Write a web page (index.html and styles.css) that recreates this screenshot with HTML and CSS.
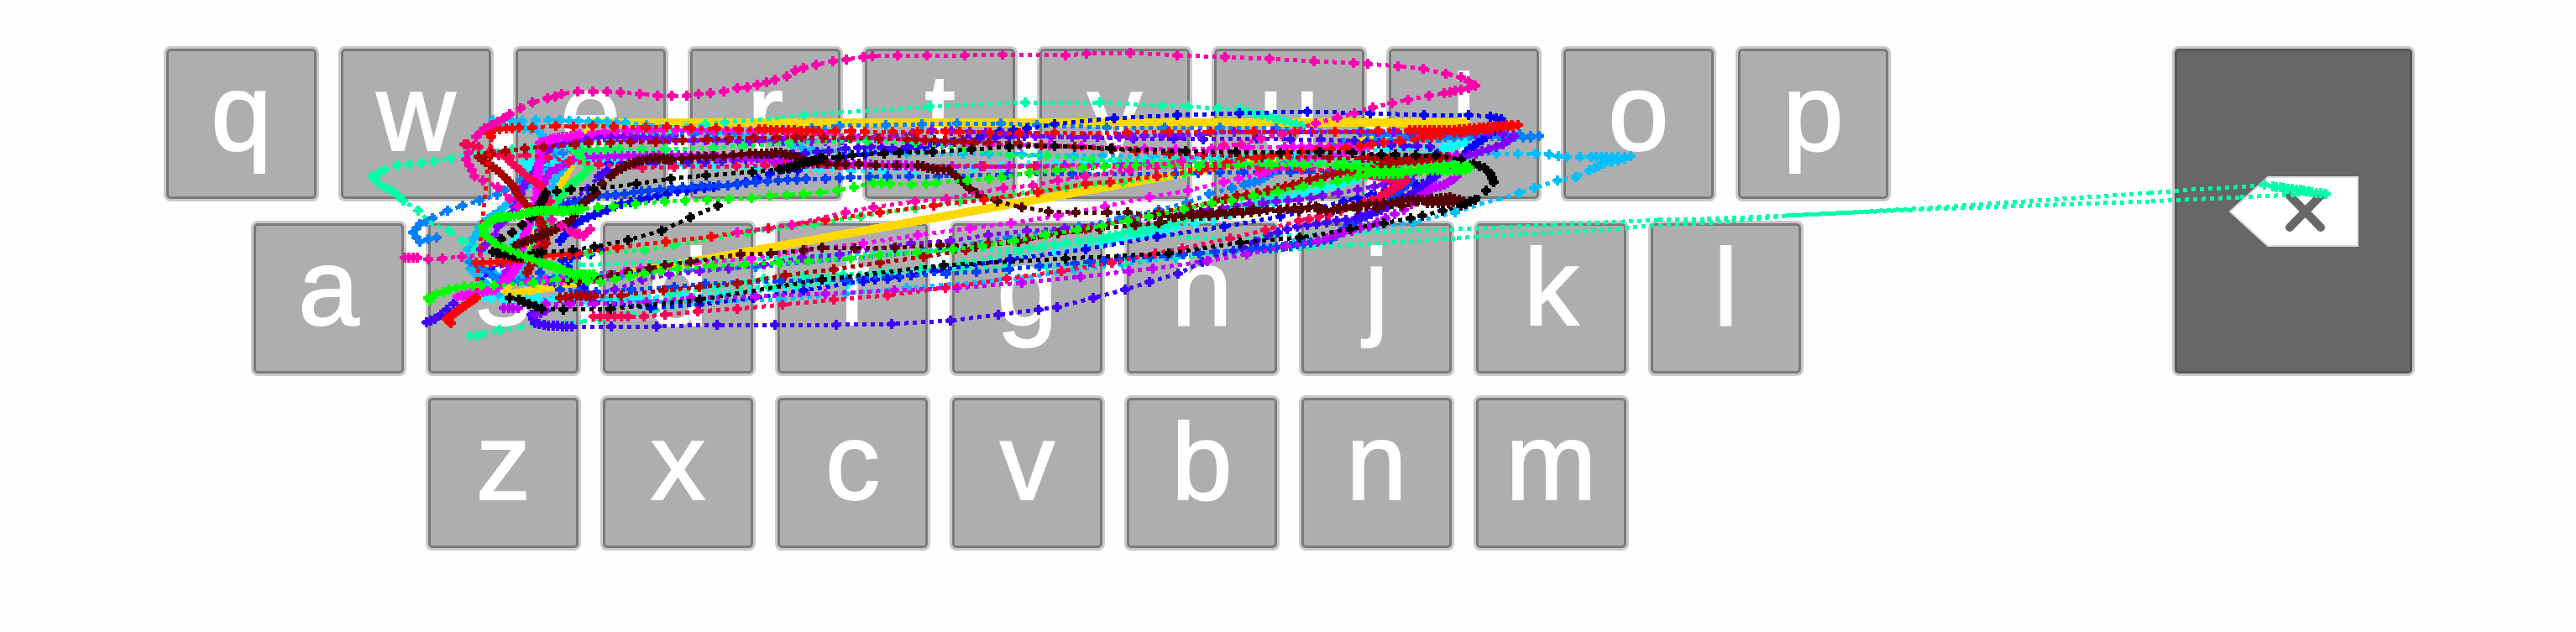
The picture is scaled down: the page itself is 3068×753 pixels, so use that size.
FILE: index.html
```html
<!DOCTYPE html>
<html lang="en">
<head>
<meta charset="utf-8">
<title>Gesture keyboard traces</title>
<link rel="stylesheet" href="styles.css">
</head>
<body>
<main class="keyboard">
  <div class="row row-top">
    <button class="key">q</button><button class="key">w</button><button class="key">e</button><button class="key">r</button><button class="key">t</button><button class="key">y</button><button class="key">u</button><button class="key">i</button><button class="key">o</button><button class="key">p</button>
  </div>
  <div class="row row-home">
    <button class="key">a</button><button class="key">s</button><button class="key">d</button><button class="key">f</button><button class="key">g</button><button class="key">h</button><button class="key">j</button><button class="key">k</button><button class="key">l</button>
  </div>
  <div class="row row-bottom">
    <button class="key">z</button><button class="key">x</button><button class="key">c</button><button class="key">v</button><button class="key">b</button><button class="key">n</button><button class="key">m</button>
  </div>
  <button class="key key-delete" aria-label="Backspace">
    <svg class="delete-icon" viewBox="0 0 154 84" aria-hidden="true">
      <path class="delete-shape" d="M1 42L46 1H153V83H46Z"/>
      <path class="delete-cross" d="M72 23L109 61M109 23L72 61"/>
    </svg>
  </button>
  <svg class="traces" viewBox="0 0 3068 753" preserveAspectRatio="none" aria-hidden="true">
    <path class="ideal" d="M600 352L1745 146H706L600 352"/>
  </svg>
</main>
<script src="traces.js"></script>
</body>
</html>
```

FILE: styles.css
```css
* {
  box-sizing: border-box;
}

body {
  margin: 0;
  background: #fefefe;
  font-family: "Liberation Sans", Arial, sans-serif;
}

.keyboard {
  position: relative;
  display: grid;
  grid-template-columns: repeat(26, minmax(0, 1fr));
  gap: 23px;
  padding: 55px 192px 97px 195px;
}

.row {
  display: flex;
  gap: 23px;
}

.row-top {
  grid-column: 1 / span 20;
  grid-row: 1;
}

.row-home {
  grid-column: 2 / span 18;
  grid-row: 2;
}

.row-bottom {
  grid-column: 4 / span 14;
  grid-row: 3;
}

.key {
  display: flex;
  flex: 1 1 0;
  align-items: center;
  justify-content: center;
  min-width: 0;
  height: 185px;
  padding: 0 0 28px;
  border: 3px solid #c9c9c9;
  border-radius: 8px;
  background: #adaeb0;
  box-shadow: inset 0 0 0 3px #7a7a7b;
  color: #fff;
  font: 130px/1 "Liberation Sans", Arial, sans-serif;
  -webkit-text-stroke: 2px #fff;
}

.key-delete {
  grid-column: 24 / span 3;
  grid-row: 1 / span 2;
  height: auto;
  padding: 0;
  background: #676769;
  box-shadow: inset 0 0 0 3px #575758;
}

.delete-icon {
  width: 154px;
  height: 84px;
}

.delete-shape {
  fill: #fff;
  stroke: #dcdcdc;
  stroke-width: 2;
}

.delete-cross {
  stroke: #676769;
  stroke-width: 10;
  stroke-linecap: round;
}

.traces {
  position: absolute;
  inset: 0;
  width: 100%;
  height: 100%;
  pointer-events: none;
  shape-rendering: crispEdges;
}

.ideal {
  fill: none;
  stroke: #ffd800;
  stroke-width: 10;
  stroke-linejoin: round;
}

.trace-line {
  fill: none;
  stroke-width: 5;
  stroke-dasharray: 5 5;
}
```

FILE: traces.js
```js
// Each trace is a colour and its touch samples. "@n" sets the sample spacing
// for the segments after it; "@0" marks only the listed points and "@-"
// leaves them unmarked.
const traces = [
  ["#00bfff", "@12 587,143 622,144 638,143 667,143 689,144 712,145 745,146 @25 870,160 @10 930,168 943,173 967,178 @0 1000,180 1080,183 1147,183 1178,183 1217,184 1238,185 1279,186 1313,185 1375,187 1410,188 @30 1600,186 @0 1782,183 1808,183 1829,183 1845,184 @12 1866,187 1882,187 1895,187 @7 1913,187 1927,187 1942,186 1927,191 1910,195 1893,203 @0 1877,211 1855,215 1827,224 1809,230 @- 1787,237 1767,242 @0 1733,253 1683,265 1600,277 1540,290 1400,307 1337,315 1280,322 1213,332 1080,343 1007,350 930,357 800,360 @20 700,355 600,357 @8 570,330 560,320 557,297 575,265 600,247 650,200 665,180 640,155 600,150"],
  ["#00bfff", "@7 565,320 590,327 620,331 @7 632,300 650,275 @8 660,215 675,195"],
  ["#0080ff", "@7 520,283 510,285 500,288 492,277 500,267 515,260 @0 533,251 551,245 571,239 592,232 @12 610,222 640,200 680,177 700,165 @25 780,162 850,158 900,158 @40 1000,150 @0 1055,149 1098,148 1140,147 1192,147 1235,149 1318,152 1387,152 1453,152 1520,153 1620,158 @9 1730,165 1777,162 1810,160 1823,162 1833,162 1823,164 1777,162 @15 1700,164 1600,170 1560,180 1540,190 @6 1500,215 1482,220 @0 1467,224 1440,231 1413,242 1380,250 1333,260 1285,270 1200,283 1100,300 900,318 820,322 740,328 @8 610,335 593,333 575,320 560,312"],
  ["#00ffff", "@8 573,352 585,355 @12 600,358 640,355 @20 700,360 @0 760,355 813,352 863,350 923,345 1010,338 1070,328 1148,317 1257,300 1311,290 @12 1358,281 1400,270 @25 1445,262 1483,250 @9 1550,232 1587,222 1610,215 1650,200 1720,178 1745,170 1720,175 @35 1650,178 1400,190 1257,195 1193,198 1090,203 1013,203 900,200 852,198 700,190 @8 625,193 627,200 670,253 665,245 625,275 610,290"],
  ["#00ffaa", "@6 560,400 568,400 575,398 @0 595,393 @- 620,390 660,385 694,383 @40 714,380 780,370 830,362 880,343 950,340 1097,320 @0 1148,313 1213,300 1313,285 1353,278 @- 1443,284 1533,281 1627,277 1737,273 1850,268 1975,262 2033,261 2127,257 2277,249 2560,230 2610,226 2680,222 @0 2697,220 2707,222 @5 2720,224 2740,226 2753,229 2770,231 @- 2733,232 2667,235 2560,240 2277,250 2127,257 2060,264 1950,270 1910,274 1813,279 1760,282 1733,284 1607,292 1560,296 1493,300 1413,305 @50 1340,312 1247,318 1097,322 910,332 800,350"],
  ["#00ffaa", "@- 1620,195 @12 1500,240 1400,265 @8 1313,283 @14 1213,297 @- 1093,300 1007,303 907,308 757,313 693,316 620,313 @0 567,297 550,286 535,275 @- 515,267 @0 498,251 480,239 @8 467,227 453,220 443,210 458,202 @0 473,197 487,196 502,194 517,192 537,189 560,182 610,178 @25 700,172 772,159 840,148 @0 863,146 @- 930,140 @0 958,137 @- 1000,134 1097,128 @0 1107,127 1221,122 1310,122 1384,126 1415,127 1450,129 1477,130 @8 1495,136 1510,138 1523,142 1537,146 1550,150"],
  ["#0000ff", "@8 667,287 685,267 693,262 715,253 740,243 @12 783,233 807,228 828,225 850,223 867,221 888,217 902,213 @25 917,207 950,203 980,190 1080,177 @10 1133,170 @20 1190,157 1223,153 @0 1256,148 1327,141 1402,137 1476,135 1557,133 1632,135 1696,137 1749,137 1775,139 @6 1788,142 1790,148 1770,163 1750,177 1740,190 @20 1687,220 1650,228 1600,240 @0 1570,248 1525,258 1458,270 1378,282 1293,297 1203,309 1113,323 1085,328 @15 1028,335 @0 957,346 897,355 833,363 775,367 707,360 @10 670,310 690,303 703,303 715,298"],
  ["#0040ff", "@10 647,275 647,290 643,325 @20 667,345 710,348 @0 752,345 803,342 840,338 930,335 1010,333 1127,326 1163,324 1202,321 1238,317 1280,314 @20 1350,307 1390,305 1447,300 1490,297 @8 1520,295 1553,290 1585,285 1607,267 1640,252 1665,230 1680,215 @25 1607,203 1537,205 1453,205 1400,207 @0 1277,207 1200,208 1117,210 1083,210 1057,210 1036,211 1013,211 1000,212 983,213 960,213 @12 927,215 900,217 867,221 813,223 773,227 755,229 733,232 713,233 @7 690,240 670,243"],
  ["#4000ff", "@5 508,384 518,380 @0 525,375 532,369 540,362 @- 560,350 577,330 585,320 605,315 650,262 @0 700,225 713,210 @7 723,203 725,195 @20 740,195 860,192 @14 987,180 1007,177 1037,175 1063,177 @20 1167,165 1220,162 @0 1350,165 1398,165 1433,166 1497,165 1537,166 1573,166 1613,168 @15 1657,173 1703,175 1720,190 @7 1710,210 1690,225 1665,240 1645,250 1615,260 @14 1580,265 1545,270 1510,280 1480,295 @0 1432,312 1403,326 1369,336 1340,345 1302,355 1259,366 1237,369 1189,375 1132,382 1062,386 996,387 923,387 854,387 782,389 728,389 681,389 @6 653,388 637,385 633,375"],
  ["#8000ff", "@6 637,375 650,370 @25 680,360 732,345 @0 765,333 797,327 833,323 868,320 910,315 955,307 1000,303 1085,290 1132,287 1177,280 1223,275 1268,272 1353,262 1440,250 @15 1488,243 1520,240 1547,238 1575,233 @0 1594,230 1617,226 1637,222 @9 1657,217 1700,200 1750,185 1773,178 1790,172 1803,162 1790,160 @20 1740,158 1620,157 @40 1562,157 1470,157 1428,160 @20 1363,162 1333,163 1307,163 1277,163 1252,163 1155,157 1110,155 1063,162 983,168 933,168 @14 813,167 @8 750,163 713,163 680,168 657,173 640,200 623,223 610,253 593,270 590,280 573,297"],
  ["#bf00ff", "@6 600,367 617,367 @30 650,362 708,362 @0 770,360 823,355 900,353 983,350 1065,346 1140,343 1217,337 1287,330 1345,323 1373,320 1438,311 1485,303 1532,293 1570,287 @10 1600,277 1630,270 1650,260 1672,250 1690,235 @5 1705,225 1720,220 1735,210 @10 1735,185 1700,193 @35 1600,195 1500,195 1400,195 1202,198 1100,198 @7 940,194 920,192 @12 870,187 @8 800,185 740,186 690,187 670,197 655,205 640,230 625,280 600,330"],
  ["#ff00ff", "@5 545,353 560,350 590,345 607,330 617,315 625,280 640,240 640,210 643,190 643,170 660,165 690,160 @14 720,157 760,155 820,155 880,156 950,158 @30 1050,165 1100,167 1180,172 1250,173 @40 1400,178 1530,175 @12 1560,175 1630,175 1600,183 1560,190 @7 1520,200 1500,207 @0 1475,213 1457,217 1415,227 1369,235 1316,246 1260,257 1204,266 1155,272 1093,280 1028,290 960,298 895,308 830,313 763,320 @20 707,332 630,335"],
  ["#00ff55", "@14 633,300 @8 663,240 677,223 @4 685,216 693,210 702,200 @8 685,180 712,178 738,177 @0 765,177 793,178 850,176 885,174 940,170 1033,168 1090,170 1147,177 1203,185 1247,185 1300,190 1400,193 1500,190 1600,193 @20 1750,195 1720,197 @30 1480,195 @0 1410,207 1337,217 1270,223 1143,240 1090,248 1025,258 970,267 890,277 803,292 768,298 700,302 660,303 633,300"],
  ["#ff0055", "@6 553,172 557,172 570,175 @0 585,182 @8 603,188 610,195 620,203 630,212 645,222 655,240 640,260 650,280 640,295"],
  ["#ff0055", "@0 585,180 607,187 627,185 653,188 678,192 713,196 765,200 803,199 877,198 911,197 936,197 1000,197 1172,198 1232,198 1315,198 @60 1500,200 1600,203 @4 1675,215 1660,225 1643,235 @8 1625,240 @14 1583,256 1547,263 @0 1507,274 1465,284 1408,296 1376,302 1324,313 1264,323 1199,332 1126,343 1057,352 993,357 932,363 878,368 831,371 792,375 767,377 748,377 @8 732,377 707,377"],
  ["#aa0000", "@5 628,325 635,310 650,290 645,265 630,247 620,237 610,220 595,205 570,187 @9 585,184 @0 602,180 625,177 647,175 685,172 701,170 727,170 751,169 781,169 813,167 843,166 868,165 898,164 925,164 947,163 955,163 981,164 1013,164 1047,165 1080,166 @12 1113,167 1160,170 1177,170 @0 1213,171 1240,173 1280,175 1325,178 1353,180 1393,183 1433,184 1503,187 1583,188 1623,188 @7 1673,190 1723,187 1700,190 1670,193 @9 1647,198 1633,202 1613,203 1587,208 1560,214 1540,220 1522,224 @14 1497,230 1473,233 1447,240 @25 1417,247 1380,253 @0 1293,273 1223,285 1177,290 1150,298 1100,306 1048,313 993,321 935,328 878,338 833,342 790,346 740,352 708,353 @6 687,352 667,355"],
  ["#550000", "@5 613,293 633,285 657,275 680,263 @9 687,250 @5 697,240 710,230 @9 717,219 727,210 @5 735,203 745,198 760,192 780,188 800,190 @10 823,188 850,186 873,185 893,183 @6 907,183 930,182 947,187 963,193 @12 985,195 1007,196 1023,195 @0 1043,197 1068,197 1093,197 @6 1117,202 1130,202 1142,213 @10 1155,225 1170,234 @0 1188,240 1217,247 1249,252 1281,253 1319,253 1343,253 1375,256 @10 1400,258 1430,253 1453,252 @18 1493,249 1525,250 @8 1567,246 1580,251 1603,247 1630,243 1657,242 @6 1677,238 1700,238 1727,235 1743,240 1725,242 1700,242 @25 1640,248 1500,252 @10 1420,258 @0 1380,266 1352,268 1310,273 1260,278 1213,288 1162,294 1120,292 1066,295 1018,296 979,295 957,298 918,302 882,303 822,312 792,316 773,320 748,324 728,328 710,332 @12 690,335 663,333"],
  ["#ff0000", "@4 537,385 532,380 545,370 567,355 @- 572,297 575,257 580,207 585,167 @5 585,158 578,155 595,154 @9 618,152 @0 634,152 662,150 683,151 706,150 731,151 769,152 794,151 823,153 853,153 880,154 904,154 @7 925,155 975,156 @0 995,156 1014,156 1030,157 1063,157 1093,157 1126,157 1143,157 1179,158 1214,158 1256,158 1342,158 1392,157 1442,157 1493,157 1542,157 1590,157 1642,156 1679,155 @6 1732,155 1762,152 1783,150 1800,149 1808,149 1783,152 1732,158 @12 1715,161 1685,166 @18 1648,170 1620,174 1533,183 1477,190 1430,203 @0 1378,210 1322,217 1293,219 1236,229 1172,238 1112,245 1048,253 983,262 915,272 847,282 793,288 735,295 687,302 @9 640,305 600,312 567,313"],
  ["#000000", "@0 855,245 822,259 788,275 748,286 708,294 682,298 645,301 @5 620,307 587,300 @0 597,285 610,277 622,268 632,260 @4 643,243 650,230 @0 663,228 680,226 707,225 758,219 799,213 841,209 896,205 928,202 @5 947,198 962,193 980,188 @0 1000,187 1015,185 1053,183 1071,182 1111,181 1157,178 1202,175 1256,174 1323,177 1412,180 1472,181 1525,182 1572,181 1611,182 1645,184 1662,184 1686,185 1710,185 1740,190 1755,195 @6 1768,200 1775,207 1779,217 @0 1770,227 1757,238 @7 1740,245 @0 1718,251 1694,257 1680,260 1648,266 1608,273 1548,283 1477,289 1392,302 1269,308 1124,316 979,333 833,357 727,368 671,369 645,368 @8 630,362 618,357 607,355"],
  ["#00ff00", "@6 512,358 510,355 520,350 @9 535,345 553,341 573,340 @0 588,340 635,337 663,333 700,335 715,336 @20 767,326 807,320 @0 849,317 887,315 928,313 963,311 1013,308 1047,304 1092,301 1135,297 1170,293 1208,287 1245,280 1283,274 1313,269 1343,263 1368,258 1410,249 1443,242 1467,239 1493,233 1522,228 1552,222 1573,219 1593,216 @10 1617,210 1637,207 @6 1670,207 @10 1700,203 @6 1730,204 1740,203 1750,200 1730,197 @10 1680,203 1640,203 1600,198 @0 1593,197 1553,197 1514,196 1475,197 1428,198 1387,197 1353,197 1315,198 1289,200 1258,203 1226,206 1193,211 1178,213 1152,215 1115,218 1103,219 1085,220 1060,219 1050,218 1040,218 1017,223 997,227 977,229 957,231 937,232 917,233 895,236 868,237 842,238 816,239 792,240 757,243 730,246 712,247 693,249 @5 678,251 640,251 613,257 590,260 575,270 577,280 590,290 @9 617,302 643,313 @5 667,320 683,327 707,327"],
  ["#ff00aa", "@5 482,307 497,307 @0 510,309 527,308 550,306 @- 575,304"],
  ["#ff00aa", "@0 878,277 943,268 1007,253 1040,247 1090,240 1127,237 1195,224 1230,221 1260,215 1292,210 1345,203 1407,192 1457,173 1478,172 1502,165 1527,160 1567,147 1593,140 1613,135 1635,128 1658,123 1677,119 1702,114 1720,111 @8 1740,107 1757,102 1740,92 @0 1722,88 1695,82 1665,79 1629,76 1612,75 1565,73 1512,70 1459,68 1402,66 1346,63 1294,64 1269,66 1194,65 1149,66 1104,66 1069,66 1039,67 1028,68 1008,71 992,73 972,77 957,81 947,84 937,91 923,95 913,98 902,101 890,104 878,105 862,109 846,111 832,112 818,114 800,114 783,114 762,112 739,110 723,109 706,109 688,109 669,112 @10 652,117 @0 634,122 620,129 607,136 @8 593,145 577,153 567,163"],
  ["#ff00aa", "@7 558,182 555,190 562,203 @0 565,210 575,215 593,223 607,237 617,246"],
  ["#ff00aa", "@6 657,262 @14 680,276 @5 695,281 703,273"]
];

const svgNS = "http://www.w3.org/2000/svg";
const layer = document.querySelector(".traces");

function addPath(d, attrs) {
  const path = document.createElementNS(svgNS, "path");
  path.setAttribute("d", d);
  for (const name in attrs) path.setAttribute(name, attrs[name]);
  layer.appendChild(path);
}

function marker(x, y) {
  return `M${Math.round(x) - 2} ${Math.round(y) - 6}h4v3h2v1h2v4h-2v1h-2v3h-4v-3h-2v-1h-2v-4h2v-1h2z`;
}

for (const [color, data] of traces) {
  let mode = "0";
  let last = null;
  let line = "";
  let marks = "";
  for (const token of data.split(" ")) {
    if (token[0] === "@") {
      mode = token.slice(1);
      continue;
    }
    const [x, y] = token.split(",").map(Number);
    // A subpath for each segment restarts the dots at every sample.
    if (last) line += `M${last[0]} ${last[1]}L${x} ${y}`;
    if (mode !== "-") {
      const spacing = Number(mode);
      if (last && spacing) {
        const steps = Math.round(Math.hypot(x - last[0], y - last[1]) / spacing);
        for (let i = 1; i < steps; i++) {
          marks += marker(last[0] + (x - last[0]) * i / steps, last[1] + (y - last[1]) * i / steps);
        }
      }
      marks += marker(x, y);
    }
    last = [x, y];
  }
  addPath(line, { class: "trace-line", stroke: color });
  addPath(marks, { fill: color });
}
```
